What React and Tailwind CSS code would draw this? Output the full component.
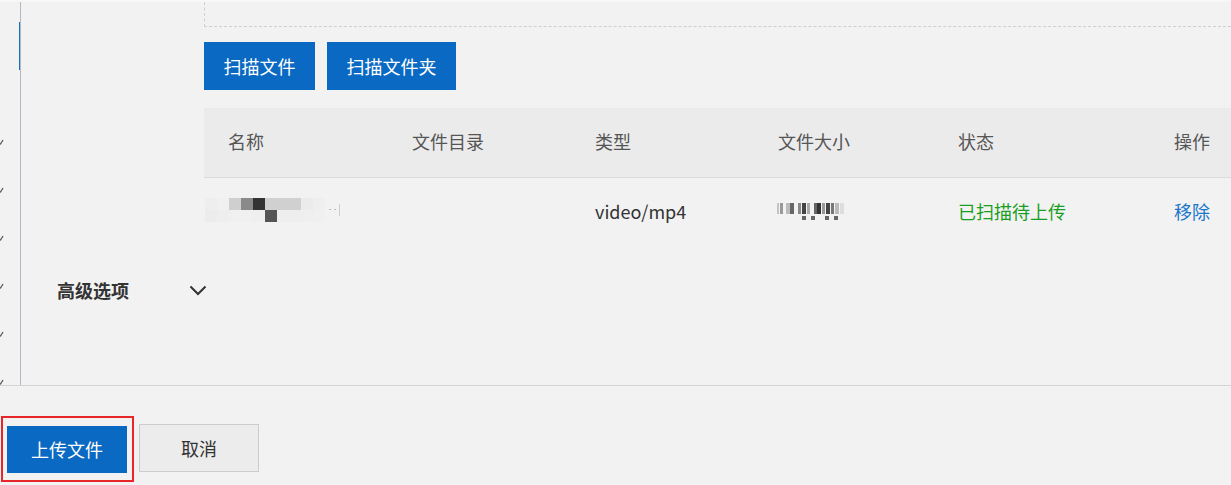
import React from "react";

const font = { fontFamily: '"Segoe UI", "Noto Sans CJK SC", "Liberation Sans", sans-serif' };

function Check() {
  return (
    <svg width="5" height="6" viewBox="0 0 5 6" className="block">
      <path d="M0 4.5 L1.5 5 L4 1" stroke="#555" strokeWidth="1.2" fill="none" />
    </svg>
  );
}

function NameBlur() {
  const r1 = ["#eeeeee", "#f0f0f0", "#cfcfcf", "#8a8a8a", "#333333", "#d0d0d0", "#d0d0d0", "#d0d0d0", "#ebebeb", "#efefef"];
  const r2 = ["#ececec", "#eeeeee", "#f0f0f0", "#f0f0f0", "#efefef", "#555555", "#eeeeee", "#eeeeee", "#efefef", "#f0f0f0"];
  return (
    <svg width="140" height="26" viewBox="0 0 140 26" className="block">
      {r1.map((c, i) => (
        <rect key={"a" + i} x={i * 12} y="0" width="12" height="12" fill={c} />
      ))}
      {r2.map((c, i) => (
        <rect key={"b" + i} x={i * 12} y="12" width="12" height="12" fill={c} />
      ))}
      <rect x="124" y="11" width="2" height="1" fill="#bbb" />
      <rect x="129" y="11" width="2" height="1" fill="#bbb" />
      <rect x="134" y="6" width="1" height="12" fill="#ccc" />
    </svg>
  );
}

function SizeBlur() {
  const top = [
    [0, "#c4c4c4", 2], [3, "#999", 3], [9, "#bbb", 4], [13, "#666", 4], [21, "#888", 3], [25, "#444", 4],
    [30, "#aaa", 3], [37, "#666", 3], [40, "#333", 4], [45, "#999", 3], [49, "#444", 4], [54, "#777", 3], [58, "#bbb", 4], [63, "#ddd", 4],
  ];
  return (
    <svg width="72" height="24" viewBox="0 0 72 24" className="block">
      {top.map(([x, c, w], i) => (
        <rect key={i} x={x} y={4} width={w} height={11} fill={c} />
      ))}
      <rect x="25" y="17" width="4" height="4" fill="#666" />
      <rect x="34" y="17" width="4" height="4" fill="#666" />
      <rect x="48" y="17" width="4" height="4" fill="#666" />
      <rect x="57" y="17" width="4" height="4" fill="#666" />
    </svg>
  );
}

export default function App() {
  const checks = [142, 190, 238, 286, 334, 382];
  return (
    <div className="w-[1231px] h-[485px] bg-[#f2f2f2] overflow-hidden text-[18px] text-[#333]" style={font}>
      <div className="h-[386px] flex border-b border-[#d3d3d3] border-t-2 border-t-[#f7f7f7]">
        {/* left strip */}
        <div className="relative w-[21px] shrink-0 border-r border-[#b0b9c7]">
          <div className="absolute right-0 top-[20px] w-[1px] h-[48px] bg-[#1f6fc1]" />
          {checks.map((y) => (
            <div key={y} className="absolute left-[-1px]" style={{ top: y - 5 }}>
              <Check />
            </div>
          ))}
        </div>
        {/* main */}
        <div className="flex-1 flex flex-col">
          <div className="flex">
            <div className="w-[183px] shrink-0" />
            <div className="flex-1 h-[25px] border-l border-b border-dashed border-[#cfcfcf]" />
          </div>
          <div className="flex mt-[15px]">
            <div className="w-[183px] shrink-0" />
            <div className="flex gap-[12px]">
              <button className="w-[111px] h-[48px] bg-[#0a69c2] text-white text-[18px]">扫描文件</button>
              <button className="w-[129px] h-[48px] bg-[#0a69c2] text-white text-[18px]">扫描文件夹</button>
            </div>
          </div>
          <div className="flex mt-[18px]">
            <div className="w-[183px] shrink-0" />
            <div className="flex-1">
              <div className="grid grid-cols-[184px_183px_183px_180px_216px_1fr] h-[70px] pb-[2px] items-center bg-[#ebebeb] border-b border-[#dcdcdc] text-[#555]">
                <div className="pl-6">名称</div>
                <div className="pl-6">文件目录</div>
                <div className="pl-6">类型</div>
                <div className="pl-6">文件大小</div>
                <div className="pl-6">状态</div>
                <div className="pl-6">操作</div>
              </div>
              <div className="grid grid-cols-[184px_183px_183px_180px_216px_1fr] h-[66px] items-center">
                <div className="pl-[1px]">
                  <NameBlur />
                </div>
                <div />
                <div className="pl-6">video/mp4</div>
                <div className="pl-[23px]">
                  <SizeBlur />
                </div>
                <div className="pl-6 text-[#1a9e22]">已扫描待上传</div>
                <div className="pl-6 text-[#1a76c9]">移除</div>
              </div>
            </div>
          </div>
          <div className="flex items-center h-[32px] mt-[30px] w-[190px]">
            <span className="pl-[36px] font-bold flex-1">高级选项</span>
            <svg width="18" height="11" viewBox="0 0 18 11" className="mr-[4px]">
              <path d="M1.5 1.5 L9 9 L16.5 1.5" stroke="#333" strokeWidth="2" fill="none" />
            </svg>
          </div>
        </div>
      </div>
      {/* footer */}
      <div className="flex items-start pt-[30px] pl-[1px] gap-[5px]">
        <div className="border-2 border-[#e8262a] p-[3px] w-[133px] h-[66px]">
          <button className="w-[120px] h-[47px] ml-[1px] mt-[5px] bg-[#0a69c2] text-white text-[18px]">上传文件</button>
        </div>
        <button className="mt-[8px] w-[120px] h-[48px] bg-[#ececec] border border-[#cccccc] text-[#333] text-[18px]">取消</button>
      </div>
    </div>
  );
}
